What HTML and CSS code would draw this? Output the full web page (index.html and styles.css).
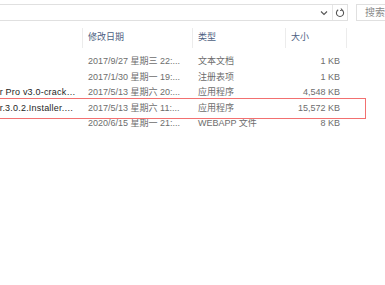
FILE: index.html
```html
<!DOCTYPE html>
<html lang="zh-CN">
<head>
  <meta charset="UTF-8" />
  <title>文件列表</title>
  <link rel="stylesheet" href="styles.css">
</head>
<body>

  <div class="toolbar">
    <div class="address">
      <svg class="chevron" width="8" height="6" viewBox="0 0 8 6"><path d="M1 1.5 L4 4.5 L7 1.5" fill="none" stroke="#555" stroke-width="1.1"/></svg>
      <span class="divider"></span>
      <svg class="refresh" width="10" height="10" viewBox="0 0 10 10"><path d="M3.2 1.8 A3.6 3.6 0 1 0 6.8 1.8" fill="none" stroke="#555" stroke-width="1.1"/><path d="M6.2 0.4 L6.9 2.1 L5.1 2.6" fill="none" stroke="#555" stroke-width="1"/></svg>
    </div>
    <div class="search">搜索</div>
  </div>

  <div class="list">
    <div class="head">
      <div class="col name"></div>
      <div class="col date">修改日期</div>
      <div class="col type">类型</div>
      <div class="col size">大小</div>
    </div>

    <div class="row">
      <div class="col name">说明</div>
      <div class="col date">2017/9/27 星期三 22:...</div>
      <div class="col type">文本文档</div>
      <div class="col size">1 KB</div>
    </div>
    <div class="row">
      <div class="col name">注册</div>
      <div class="col date">2017/1/30 星期一 19:...</div>
      <div class="col type">注册表项</div>
      <div class="col size">1 KB</div>
    </div>
    <div class="row">
      <div class="col name">Fiddler Pro v3.0-crack.exe</div>
      <div class="col date">2017/5/13 星期六 20:...</div>
      <div class="col type">应用程序</div>
      <div class="col size">4,548 KB</div>
    </div>
    <div class="row marked">
      <div class="col name">Fiddler.3.0.2.Installer.exe</div>
      <div class="col date">2017/5/13 星期六 11:...</div>
      <div class="col type">应用程序</div>
      <div class="col size">15,572 KB</div>
    </div>
    <div class="row">
      <div class="col name">官网</div>
      <div class="col date">2020/6/15 星期一 21:...</div>
      <div class="col type">WEBAPP 文件</div>
      <div class="col size">8 KB</div>
    </div>
  </div>

</body>
</html>
```

FILE: styles.css
```css
body {
  margin: 0;
  background: #fff;
  font-family: "Liberation Sans", "Noto Sans CJK SC", sans-serif;
  font-size: 9px;
  color: #6d6d6d;
  overflow: hidden;
}

.toolbar { display: flex; padding-top: 4px; height: 17px; }
.address {
  width: 357px; margin-left: -2px;
  border: 1px solid #e0e0e0; box-sizing: border-box;
  display: flex; align-items: center; justify-content: flex-end;
}
.chevron { margin-right: 2px; }
.divider { width: 1px; height: 15px; background: #e6e6e6; margin: 0 2px; }
.refresh { margin-right: 2px; }
.search {
  margin-left: 8px; flex: 1;
  border: 1px solid #e0e0e0; border-right: none; box-sizing: border-box;
  padding-left: 8px; line-height: 15px; font-size: 10px; color: #8a8a8a; white-space: nowrap;
}

.list { margin-left: -32px; margin-top: 7px; width: 395px; }
.head, .row { display: flex; }
.head { height: 20px; align-items: center; color: #4d6082; }
.head .col { border-right: 1px solid #ececec; height: 20px; line-height: 19px; }
.head .size { text-align: left; padding-left: 5px; padding-right: 0; }

.row { height: 15.5px; line-height: 15.5px; }
.head + .row { margin-top: 6px; }
.row.marked { outline: 1px solid rgb(242, 112, 112); outline-offset: 2px; }

.col { white-space: nowrap; overflow: hidden; box-sizing: border-box; }
.name { width: 115px; padding-left: 6px; padding-right: 6px; color: #1e1e1e; letter-spacing: 0.2px; text-overflow: ellipsis; }
.date { width: 110px; padding-left: 5px; }
.type { width: 93px; padding-left: 5px; }
.size { width: 61px; padding-right: 7px; text-align: right; }
```
